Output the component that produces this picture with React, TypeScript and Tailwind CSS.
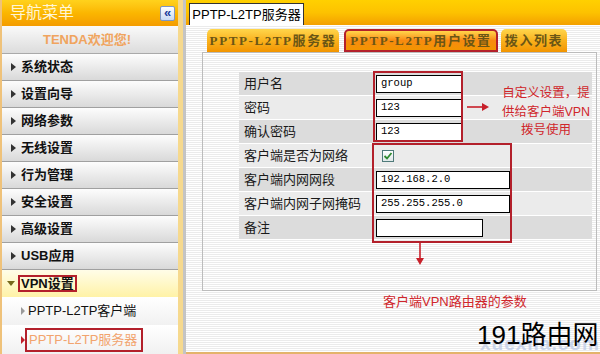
import React from "react";

const navItems = ["系统状态", "设置向导", "网络参数", "无线设置", "行为管理", "安全设置", "高级设置", "USB应用"];

type Row = { label: string; kind: "text" | "check" | "wide" | "note"; value?: string; shade: string };

const rows: Row[] = [
  { label: "用户名", kind: "text", value: "group", shade: "bg-[#dcdcdc]" },
  { label: "密码", kind: "text", value: "123", shade: "bg-[#ebebeb]" },
  { label: "确认密码", kind: "text", value: "123", shade: "bg-[#dcdcdc]" },
  { label: "客户端是否为网络", kind: "check", shade: "bg-[#ebebeb]" },
  { label: "客户端内网网段", kind: "wide", value: "192.168.2.0", shade: "bg-[#dcdcdc]" },
  { label: "客户端内网子网掩码", kind: "wide", value: "255.255.255.0", shade: "bg-[#ebebeb]" },
  { label: "备注", kind: "note", shade: "bg-[#dcdcdc]" },
];

function Arrow() {
  return <span className="h-0 w-0 border-y-[4px] border-l-[5px] border-y-transparent border-l-[#333]" />;
}

function Sidebar() {
  return (
    <div className="flex w-[178px] shrink-0 flex-col border-l-2 border-[#efc27a] font-bold">
      <div className="flex h-[26px] shrink-0 items-center justify-between bg-linear-to-b from-[#ffd21c] via-[#fbb600] to-[#f49c00] pl-[8px] pr-[3px]">
        <span className="text-[16px] font-normal text-[#fff6d6]">导航菜单</span>
        <span className="flex h-[15px] w-[15px] items-center justify-center rounded-[2px] border border-[#7f97c4] bg-linear-to-b from-white to-[#c9d9f3] pb-[2px] text-[13px] leading-none text-[#1c3c9c]">
          «
        </span>
      </div>
      <div className="flex h-[28px] shrink-0 items-center justify-center border-b border-[#a9a9a9] bg-linear-to-b from-[#fafafa] to-[#dcdcdc] pr-[6px] text-[#f0a45e]">
        TENDA欢迎您!
      </div>
      {navItems.map((item) => (
        <div
          key={item}
          className="flex h-[27px] shrink-0 items-center gap-[5px] border-b border-[#a0a0a0] bg-linear-to-b from-[#fdfdfd] to-[#d9d9d9] pl-[9px] text-[#111]"
        >
          <Arrow />
          {item}
        </div>
      ))}
      <div className="flex h-[27px] shrink-0 items-center gap-[3px] bg-linear-to-b from-[#fffde8] to-[#fff2a6] pl-[5px] text-[#111]">
        <span className="h-0 w-0 border-x-[4px] border-t-[5px] border-x-transparent border-t-[#77691c]" />
        <span className="border-2 border-[#b3202b] px-[1px] leading-[13px]">VPN设置</span>
      </div>
      <div className="flex h-[28px] shrink-0 items-center gap-[3px] bg-linear-to-b from-white to-[#f1f1f1] pl-[19px] font-normal text-[#111]">
        <span className="h-0 w-0 border-y-[4px] border-l-[4px] border-y-transparent border-l-[#9a9a9a]" />
        PPTP-L2TP客户端
      </div>
      <div className="flex flex-1 items-center bg-linear-to-b from-white to-[#f1f1f1] pl-[19px] font-normal">
        <span className="h-0 w-0 border-y-[4px] border-l-[4px] border-y-transparent border-l-[#c0202c]" />
        <span className="flex h-[24px] items-center border-2 border-[#b3202b] pl-[2px] pr-[4px] text-[#f2a46e]">
          PPTP-L2TP服务器
        </span>
      </div>
    </div>
  );
}

function Field({ row }: { row: Row }) {
  const input = "flex h-[18px] items-center border border-black bg-white px-[4px] font-['Liberation_Mono',monospace] text-[10.5px] text-black";
  if (row.kind === "check")
    return (
      <span className="ml-[6px] flex h-[12px] w-[12px] items-center justify-center border border-[#4f7a7a] bg-linear-to-b from-white to-[#dfe8e8]">
        <svg width="10" height="10" viewBox="0 0 10 10">
          <path d="M1.5 5 L4 7.5 L8.5 2" fill="none" stroke="#2f8a2f" strokeWidth="1.8" />
        </svg>
      </span>
    );
  if (row.kind === "note") return <span className={`${input} w-[107px]`} />;
  return <span className={`${input} ${row.kind === "wide" ? "w-[134px]" : "w-[86px]"}`}>{row.value}</span>;
}

function Content() {
  const tab =
    "flex h-[23px] items-center justify-center rounded-t-[5px] bg-linear-to-b from-[#ffd64a] via-[#f9b21c] to-[#f29500] font-['Liberation_Serif','Noto_Sans_CJK_SC',serif] text-[13px] font-bold tracking-[1.6px] text-[#6b5615]";
  return (
    <div className="flex min-w-0 flex-1 flex-col border-b-2 border-[#e4b36b]">
      <div className="flex h-[25px] shrink-0 items-end bg-linear-to-b from-[#ffd000] via-[#fdc200] to-[#f3a000] pl-[3px]">
        <div className="flex h-[22px] w-[115px] items-center justify-center border border-b-0 border-[#333] bg-white text-[13px] text-black">
          PPTP-L2TP服务器
        </div>
      </div>
      <div className="flex flex-1 flex-col bg-[repeating-linear-gradient(180deg,#ffffff_0px,#ffffff_1px,#ebebeb_1px,#ebebeb_2px)] pt-[4px]">
        <div className="flex h-[23px] shrink-0 pl-[21px]">
          <div className={`${tab} w-[132px]`}>PPTP-L2TP服务器</div>
          <div className={`${tab} ml-[5px] w-[154px] rounded-none border-2 border-[#b3202b] from-[#ffa830] via-[#f88a10] to-[#f27800]`}>PPTP-L2TP用户设置</div>
          <div className={`${tab} ml-[3px] w-[66px]`}>拨入列表</div>
        </div>
        <div className="ml-[16px] mr-[3px] h-[239px] border border-[#bcbcbc] pl-[36px] pt-[19px]">
          <div className="flex w-[353px] flex-col gap-[1px]">
            {rows.map((row) => (
              <div key={row.label} className={`flex h-[23px] ${row.shade}`}>
                <div className="flex w-[133px] items-center pl-[5px] text-[13px] text-[#1a1a1a]">{row.label}</div>
                <div className="flex flex-1 items-center pl-[4px]">
                  <Field row={row} />
                </div>
              </div>
            ))}
          </div>
        </div>
      </div>
    </div>
  );
}

function Notes() {
  return (
    <>
      <div className="absolute left-[373px] top-[71px] h-[71px] w-[90px] border-2 border-[#b3202b]" />
      <div className="absolute left-[372px] top-[143px] h-[100px] w-[140px] border-2 border-[#b3202b]" />
      <svg className="absolute left-[466px] top-[102px]" width="26" height="10" viewBox="0 0 26 10">
        <path d="M1 5 H19" stroke="#c8202a" strokeWidth="1.6" />
        <path d="M16 1 L23 5 L16 9 Z" fill="#c8202a" />
      </svg>
      <svg className="absolute left-[415px] top-[243px]" width="10" height="24" viewBox="0 0 10 24">
        <path d="M5 0 V18" stroke="#c8202a" strokeWidth="1.6" />
        <path d="M1 15 L5 22 L9 15 Z" fill="#c8202a" />
      </svg>
      <div className="absolute left-[498px] top-[84px] w-[96px] text-center text-[12.5px] leading-[18.5px] text-[#d0262b]">
        自定义设置，提
        <br />
        供给客户端VPN
        <br />
        拨号使用
      </div>
      <div className="absolute left-[383px] top-[293px] text-[13px] leading-[18px] text-[#d0262b]">客户端VPN路由器的参数</div>
      <div className="absolute left-[480px] top-[334px] text-[19px] font-bold leading-none tracking-[1px] text-[#b8c8e8] opacity-70">xuexila.com</div>
      <div className="absolute left-[477px] top-[322px] text-[26px] leading-none text-black">191路由网</div>
    </>
  );
}

export default function App() {
  return (
    <div className="relative flex h-[354px] w-[600px] overflow-hidden bg-white font-['Liberation_Sans','Noto_Sans_CJK_SC',sans-serif] text-[13px]">
      <Sidebar />
      <div className="flex w-[8px] shrink-0">
        <div className="w-[5px] bg-[#f6d98e]" />
        <div className="w-[3px] bg-[#c4c4c4]" />
      </div>
      <Content />
      <Notes />
    </div>
  );
}
